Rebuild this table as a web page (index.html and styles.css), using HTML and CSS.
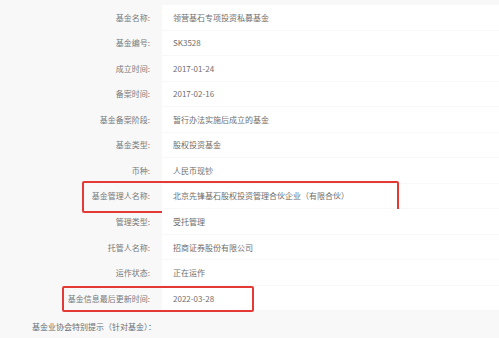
FILE: index.html
```html
<!DOCTYPE html>
<html lang="zh">
<head>
<meta charset="utf-8">
<link rel="stylesheet" href="styles.css">
</head>
<body>
<div class="page">
  <div class="row"><div class="label">基金名称:</div><div class="value">领营基石专项投资私募基金</div></div>
  <div class="row"><div class="label">基金编号:</div><div class="value">SK3528</div></div>
  <div class="row"><div class="label">成立时间:</div><div class="value">2017-01-24</div></div>
  <div class="row"><div class="label">备案时间:</div><div class="value">2017-02-16</div></div>
  <div class="row"><div class="label">基金备案阶段:</div><div class="value">暂行办法实施后成立的基金</div></div>
  <div class="row"><div class="label">基金类型:</div><div class="value">股权投资基金</div></div>
  <div class="row"><div class="label">币种:</div><div class="value">人民币现钞</div></div>
  <div class="row"><div class="label">基金管理人名称:</div><div class="value">北京先锋基石股权投资管理合伙企业（有限合伙）</div><span class="mark mark-manager"></span></div>
  <div class="row"><div class="label">管理类型:</div><div class="value">受托管理</div></div>
  <div class="row"><div class="label">托管人名称:</div><div class="value">招商证券股份有限公司</div></div>
  <div class="row"><div class="label">运作状态:</div><div class="value">正在运作</div></div>
  <div class="row"><div class="label">基金信息最后更新时间:</div><div class="value">2022-03-28</div><span class="mark mark-date"></span></div>
  <div class="note">基金业协会特别提示（针对基金）：</div>
</div>
</body>
</html>
```

FILE: styles.css
```css
html, body {
  margin: 0;
  padding: 0;
  background: #f8f8f8;
}
.page {
  width: 499px;
  height: 338px;
  overflow: hidden;
  padding-top: 5px;
  box-sizing: border-box;
  display: flex;
  flex-direction: column;
  gap: 1px;
  font-family: "Noto Sans CJK SC", "Noto Sans", sans-serif;
  font-size: 8px;
  color: #707070;
}
.row {
  position: relative;
  display: flex;
  height: 25px;
  align-items: stretch;
}
.label {
  width: 150px;
  padding-right: 12px;
  display: flex;
  align-items: center;
  justify-content: flex-end;
  color: #787878;
}
.value {
  flex: 1;
  background: #fff;
  display: flex;
  align-items: center;
  padding-left: 11px;
  color: #6e6e6e;
}
.note {
  padding-left: 32px;
  padding-top: 3px;
  height: 24px;
  display: flex;
  align-items: center;
  color: #6e6e6e;
}
.mark {
  position: absolute;
  border: 2px solid #e53935;
  border-radius: 2px;
  box-sizing: border-box;
}
.mark-manager {
  left: 82px;
  top: -3px;
  width: 317px;
  height: 32px;
}
.mark-date {
  left: 62px;
  top: 0px;
  width: 192px;
  height: 26px;
}
```
